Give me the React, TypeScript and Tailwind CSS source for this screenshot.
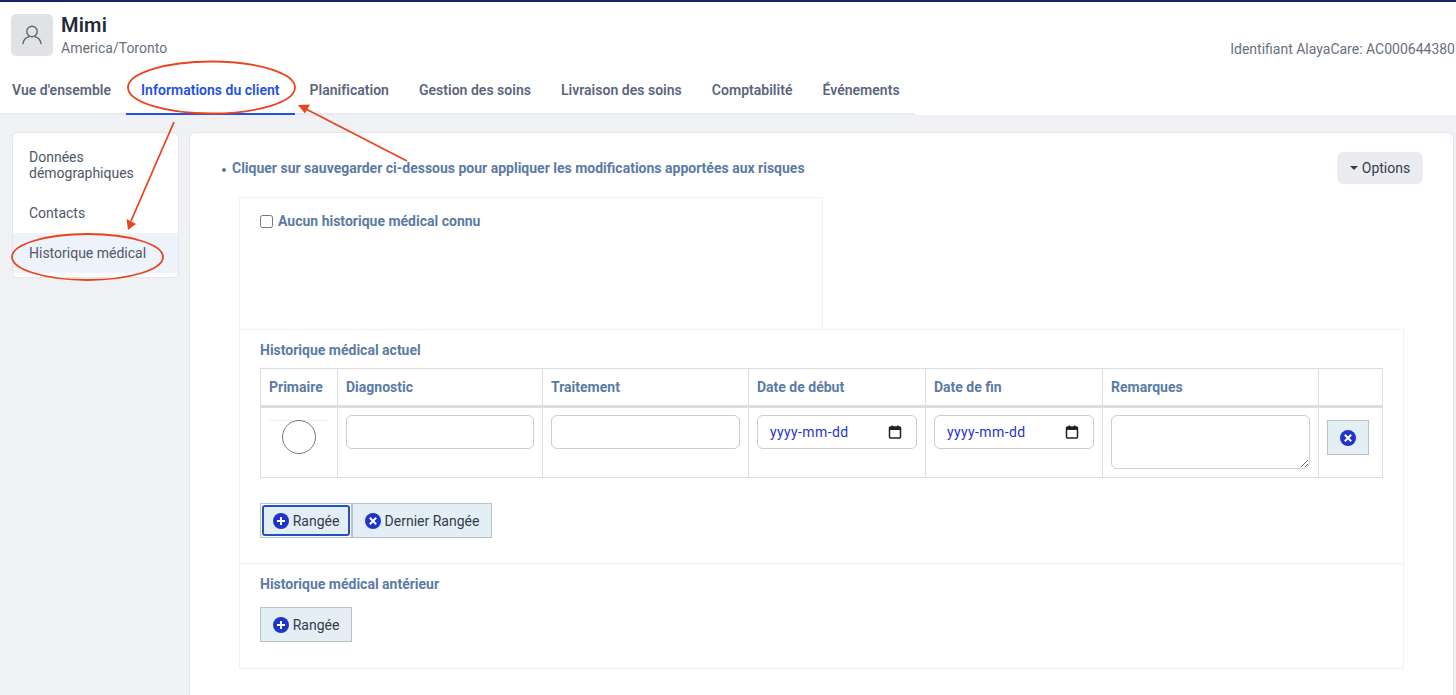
import React from "react";

const tabs = ["Vue d'ensemble", "Informations du client", "Planification", "Gestion des soins", "Livraison des soins", "Comptabilité", "Événements"];

function CalendarIcon() {
  return (
    <svg width="14" height="14" viewBox="0 0 14 14" className="shrink-0">
      <rect x="1.5" y="2" width="11" height="11" rx="1" fill="none" stroke="#222" strokeWidth="1.5" />
      <rect x="1.5" y="2" width="11" height="3" fill="#222" />
      <rect x="3.5" y="0.5" width="1.6" height="2" fill="#222" />
      <rect x="8.9" y="0.5" width="1.6" height="2" fill="#222" />
    </svg>
  );
}

function PlusCircle() {
  return (
    <svg width="16" height="16" viewBox="0 0 16 16" className="shrink-0">
      <circle cx="8" cy="8" r="8" fill="#1f35c9" />
      <path d="M8 4v8M4 8h8" stroke="#fff" strokeWidth="1.9" />
    </svg>
  );
}

function XCircle() {
  return (
    <svg width="16" height="16" viewBox="0 0 16 16" className="shrink-0">
      <circle cx="8" cy="8" r="8" fill="#1f35c9" />
      <path d="M4.8 4.8l6.4 6.4M11.2 4.8l-6.4 6.4" stroke="#fff" strokeWidth="2" />
    </svg>
  );
}

function DateField() {
  return (
    <div className="h-[34px] rounded-[6px] border border-[#ccced2] bg-white flex items-center justify-between pl-[12px] pr-[14px] text-[14px] tracking-[0.4px] text-[#1f35c9]">
      <span>yyyy-mm-dd</span>
      <CalendarIcon />
    </div>
  );
}

function RowButton({ kind, label, className }: { kind: "add" | "del"; label: string; className: string }) {
  return (
    <button className={`h-[35px] pt-[1px] flex items-center justify-center gap-[4px] bg-[#e4eef5] text-[14px] text-[#333a4d] ${className}`}>
      {kind === "add" ? <PlusCircle /> : <XCircle />}
      {label}
    </button>
  );
}

function Annotations() {
  return (
    <svg className="absolute left-0 top-0 pointer-events-none" width="1456" height="695" viewBox="0 0 1456 695" fill="none">
      <ellipse cx="211.5" cy="85.5" rx="83.5" ry="26" stroke="#e8451c" strokeWidth="1.8" />
      <ellipse cx="87.5" cy="255" rx="75.5" ry="23" stroke="#e8451c" strokeWidth="1.8" />
      <line x1="174" y1="120" x2="131" y2="219" stroke="#e8451c" strokeWidth="1.8" />
      <polygon points="128,228 126.5,217 136,222" fill="#e8451c" />
      <line x1="407" y1="159" x2="304" y2="106" stroke="#e8451c" strokeWidth="1.8" />
      <polygon points="298,103 310,102.5 305,111.5" fill="#e8451c" />
    </svg>
  );
}

export default function App() {
  const th = "border border-[#dcdde0] border-b-[3px] px-[8px] text-left font-bold text-[14px] text-[#5b7ba6] align-middle";
  const td = "border border-[#dcdde0] px-[8px] pt-[7px] align-top";
  const input = "block w-full h-[34px] rounded-[6px] border border-[#ccced2] bg-white";
  return (
    <div className="relative w-[1456px] h-[695px] overflow-hidden bg-[#f0f1f5] font-['Roboto',sans-serif] border-t-2 border-[#14246a]">
      <header className="bg-white h-[113px] flex flex-col">
        <div className="flex justify-between items-start pl-[11px] pr-[1px] pt-[12px] h-[68px]">
          <div className="flex gap-[8px]">
            <div className="w-[42px] h-[42px] rounded-[5px] bg-[#e1e2e6] flex items-center justify-center">
              <svg width="20" height="20" viewBox="0 0 20 20" fill="none" stroke="#5e6470" strokeWidth="1.4" strokeLinecap="round">
                <circle cx="10" cy="6.5" r="5.2" />
                <path d="M1 18.5c.6-4 3-6 5.5-6.7M19 18.5c-.6-4-3-6-5.5-6.7" />
              </svg>
            </div>
            <div className="flex flex-col">
              <span className="text-[20px] leading-[22px] tracking-[0.2px] font-semibold text-[#262b38]">Mimi</span>
              <span className="text-[14px] leading-[22px] mt-[1px] text-[#68707f]">America/Toronto</span>
            </div>
          </div>
          <div className="text-[14px] leading-[20px] mt-[25px] text-[#68707f]">Identifiant AlayaCare: AC000644380</div>
        </div>
        <nav className="flex w-[915px] h-[45px] border-b-2 border-[#e9eaef]">
          {tabs.map((t) => {
            const active = t === "Informations du client";
            return (
              <div
                key={t}
                className={`h-[45px] flex items-center whitespace-nowrap text-[14px] tracking-[0.02px] font-semibold ${active ? "px-[15px] pb-[2px] text-[#2350e6] border-b-2 border-[#2350e6]" : "px-[15px] pb-[4px] text-[#5b667e]"} ${t === "Vue d'ensemble" ? "pl-[12px]" : ""}`}
              >
                {t}
              </div>
            );
          })}
        </nav>
      </header>

      <div className="flex items-start gap-[10px] pl-[12px] pr-[3px] pt-[17px]">
        <aside className="w-[167px] shrink-0 rounded-[6px] border border-[#e4e5ea] bg-white pt-[16px] pb-[4px] text-[14px] leading-[16px] text-[#4f5768]">
          <div className="px-[16px] pb-[16px]">Données<br />démographiques</div>
          <div className="px-[16px] pt-[8px] pb-[12px]">Contacts</div>
          <div className="px-[16px] h-[40px] flex items-center bg-[#eef2fb]">Historique médical</div>
        </aside>

        <main className="flex-1 h-[640px] rounded-t-[6px] border border-[#e4e5ea] bg-white pl-[49px] pr-[49px] pt-[19px]">
          <div className="flex justify-between items-center h-[32px] -ml-[17px] -mr-[19px]">
            <div className="flex items-center gap-[6px] text-[14px] font-bold text-[#5b7ba6]">
              <span className="w-[4px] h-[4px] rounded-full bg-[#5b7ba6] mt-[3px]" />
              Cliquer sur sauvegarder ci-dessous pour appliquer les modifications apportées aux risques
            </div>
            <button className="w-[86px] h-[32px] rounded-[6px] bg-[#ebecf0] flex items-center justify-center gap-[4px] text-[14px] text-[#333a4d]">
              <span className="w-0 h-0 border-x-[4px] border-x-transparent border-t-[4px] border-t-[#333a4d]" />
              Options
            </button>
          </div>

          <section className="mt-[13px] w-[584px] h-[132px] border border-b-0 border-[#f0f1f5] pl-[20px] pt-[14px]">
            <label className="flex items-start gap-[5px] text-[14px] leading-[18px] font-bold text-[#5b7ba6]">
              <input type="checkbox" className="w-[13px] h-[13px] mt-[3px]" />
              Aucun historique médical connu
            </label>
          </section>

          <section className="w-[1165px] h-[340px] border border-[#f0f1f5]">
            <div className="h-[234px] px-[20px] pt-[11px] border-b border-[#f0f1f5]">
              <h3 className="text-[14px] leading-[18px] font-bold text-[#5b7ba6]">Historique médical actuel</h3>
              <table className="mt-[9px] w-[1122px] table-fixed border-collapse">
                <colgroup>
                  <col className="w-[77px]" />
                  <col className="w-[205px]" />
                  <col className="w-[206px]" />
                  <col className="w-[177px]" />
                  <col className="w-[177px]" />
                  <col className="w-[216px]" />
                  <col className="w-[64px]" />
                </colgroup>
                <thead>
                  <tr className="h-[38px]">
                    <th className={th}>Primaire</th>
                    <th className={th}>Diagnostic</th>
                    <th className={th}>Traitement</th>
                    <th className={th}>Date de début</th>
                    <th className={th}>Date de fin</th>
                    <th className={th}>Remarques</th>
                    <th className={th}></th>
                  </tr>
                </thead>
                <tbody>
                  <tr className="h-[71px]">
                    <td className={`${td} !pt-[12px]`}>
                      <div className="w-[60px] h-[34px] border-t border-[#eeeeee] flex justify-center">
                        <div className="w-[34px] h-[34px] -mt-px rounded-full border border-[#77797d] bg-white" />
                      </div>
                    </td>
                    <td className={td}><div className={input} /></td>
                    <td className={td}><div className={input} /></td>
                    <td className={td}><DateField /></td>
                    <td className={td}><DateField /></td>
                    <td className={td}><textarea className="block w-full h-[54px] rounded-[6px] border border-[#ccced2] bg-white" /></td>
                    <td className={`${td} !pt-[12px]`}>
                      <button className="w-[42px] h-[35px] bg-[#e4eef5] border border-[#b9c1c9] flex items-center justify-center">
                        <XCircle />
                      </button>
                    </td>
                  </tr>
                </tbody>
              </table>
              <div className="mt-[25px] flex">
                <div className="w-[92px] h-[35px] border border-[#b9c1c9] p-[1px]">
                  <RowButton kind="add" label="Rangée" className="w-full !h-full rounded-[3px] border-2 border-[#2350c8]" />
                </div>
                <RowButton kind="del" label="Dernier Rangée" className="w-[140px] border border-[#b9c1c9]" />
              </div>
            </div>
            <div className="px-[20px] pt-[11px]">
              <h3 className="text-[14px] leading-[18px] font-bold text-[#5b7ba6]">Historique médical antérieur</h3>
              <RowButton kind="add" label="Rangée" className="mt-[14px] w-[92px] border border-[#b9c1c9]" />
            </div>
          </section>
        </main>
      </div>
      <Annotations />
    </div>
  );
}
